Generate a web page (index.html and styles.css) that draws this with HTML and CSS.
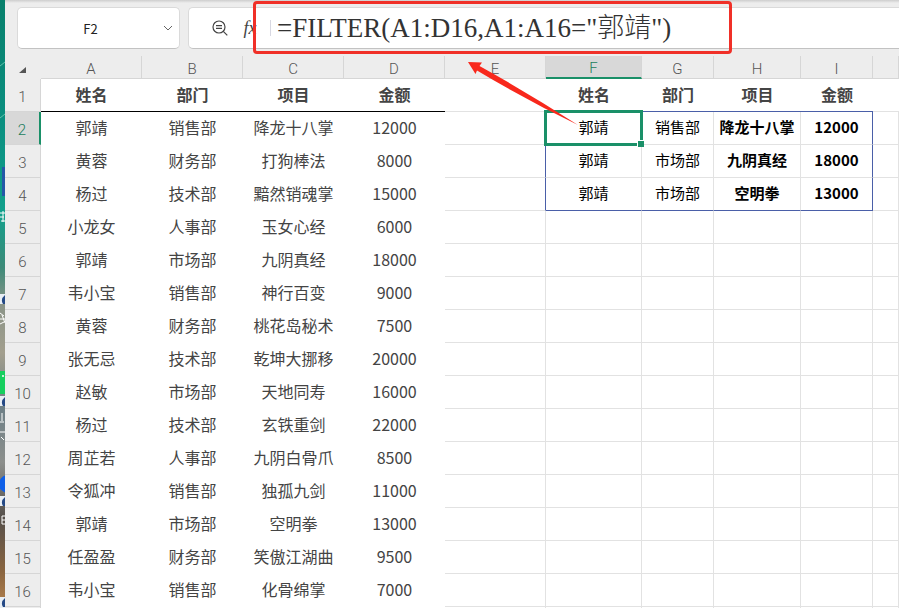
FILE: index.html
```html
<!DOCTYPE html>
<html lang="zh-CN">
<head>
    <meta charset="UTF-8">
    <meta name="viewport" content="width=device-width, initial-scale=1.0">
    <title>FILTER</title>
    <link rel="stylesheet" href="styles.css">
</head>
<body>
    <div class="desktop">
        <svg class="desktop-icons" width="5" height="608" viewBox="0 0 5 608" aria-hidden="true">
            <path d="M0 66L5 62M0 118L5 114" stroke="#5fc2ab" stroke-width="1"/>
            <rect x="2" y="167" width="3" height="29" fill="#2458a8"/>
            <path d="M0 213h5M0 217h4M1 221h4M3 211v11" stroke="#fff" stroke-width="1"/>
            <path d="M0 294h5v10H0zM0 396h5v10H0zM0 496h5v10H0zM0 597h5v11H0z" fill="#e9eff5"/>
            <path d="M5 295q-5 4-2 9h2zM5 397q-5 4-2 9h2zM5 497q-5 4-2 9h2zM5 598q-5 4-2 9h2z" fill="#254a86"/>
            <path d="M0 313l4 3M0 319h5M2 315l3 8M0 324l4-2" stroke="#fff" stroke-width="1"/>
            <path d="M0 371h5v23H0z" fill="#16cf5e"/>
            <circle cx="3" cy="376" r="1" fill="#fff"/>
            <path d="M2 413v8M0 422h4M0 432h5M1 437l3 3" stroke="#fff" stroke-width="1"/>
            <circle cx="8" cy="484" r="9" fill="#0e5fe8"/>
            <path d="M5 516H2v8h3M2 520h3" fill="none" stroke="#fff" stroke-width="1"/>
        </svg>
    </div>

    <div class="window">
        <div class="formula-bar">
            <div class="name-box">
                <input class="name-input" type="text" value="F2" aria-label="名称框">
                <button class="icon-button" type="button" aria-label="展开">
                    <svg width="10" height="6" viewBox="0 0 10 6"><path d="M1 1l4 4 4-4" fill="none" stroke="#666"/></svg>
                </button>
            </div>
            <div class="formula-box">
                <button class="icon-button" type="button" aria-label="缩小">
                    <svg width="16" height="16" viewBox="0 0 16 16" fill="none" stroke="#444" stroke-width="1.2">
                        <circle cx="7" cy="7" r="6"/>
                        <path d="M4 5.7h6M4 8.3h6M11.3 11.3l4 4"/>
                    </svg>
                </button>
                <button class="icon-button fx" type="button">fx</button>
                <span class="divider"></span>
                <input class="formula-input" type="text" value='=FILTER(A1:D16,A1:A16="郭靖")' aria-label="编辑栏">
            </div>
        </div>

        <table class="sheet">
            <colgroup>
                <col class="col-head">
                <col class="col-wide" span="5">
                <col class="col-f">
                <col class="col-g">
                <col class="col-h">
                <col class="col-g">
                <col>
            </colgroup>
            <thead>
                <tr>
                    <th class="corner"><svg width="8" height="8" viewBox="0 0 8 8"><path d="M7 1v6H0z" fill="#555"/></svg></th>
                    <th>A</th><th>B</th><th>C</th><th>D</th><th>E</th><th class="active">F</th><th>G</th><th>H</th><th>I</th><th></th>
                </tr>
            </thead>
            <tbody>
                <tr class="titles"><th>1</th><td>姓名</td><td>部门</td><td>项目</td><td>金额</td><td></td><td>姓名</td><td>部门</td><td>项目</td><td>金额</td><td></td></tr>
                <tr class="spill"><th class="active">2</th><td>郭靖</td><td>销售部</td><td>降龙十八掌</td><td>12000</td><td></td><td class="selected">郭靖</td><td>销售部</td><td>降龙十八掌</td><td>12000</td><td></td></tr>
                <tr class="spill"><th>3</th><td>黄蓉</td><td>财务部</td><td>打狗棒法</td><td>8000</td><td></td><td>郭靖</td><td>市场部</td><td>九阴真经</td><td>18000</td><td></td></tr>
                <tr class="spill spill-end"><th>4</th><td>杨过</td><td>技术部</td><td>黯然销魂掌</td><td>15000</td><td></td><td>郭靖</td><td>市场部</td><td>空明拳</td><td>13000</td><td></td></tr>
                <tr><th>5</th><td>小龙女</td><td>人事部</td><td>玉女心经</td><td>6000</td><td></td><td></td><td></td><td></td><td></td><td></td></tr>
                <tr><th>6</th><td>郭靖</td><td>市场部</td><td>九阴真经</td><td>18000</td><td></td><td></td><td></td><td></td><td></td><td></td></tr>
                <tr><th>7</th><td>韦小宝</td><td>销售部</td><td>神行百变</td><td>9000</td><td></td><td></td><td></td><td></td><td></td><td></td></tr>
                <tr><th>8</th><td>黄蓉</td><td>财务部</td><td>桃花岛秘术</td><td>7500</td><td></td><td></td><td></td><td></td><td></td><td></td></tr>
                <tr><th>9</th><td>张无忌</td><td>技术部</td><td>乾坤大挪移</td><td>20000</td><td></td><td></td><td></td><td></td><td></td><td></td></tr>
                <tr><th>10</th><td>赵敏</td><td>市场部</td><td>天地同寿</td><td>16000</td><td></td><td></td><td></td><td></td><td></td><td></td></tr>
                <tr><th>11</th><td>杨过</td><td>技术部</td><td>玄铁重剑</td><td>22000</td><td></td><td></td><td></td><td></td><td></td><td></td></tr>
                <tr><th>12</th><td>周芷若</td><td>人事部</td><td>九阴白骨爪</td><td>8500</td><td></td><td></td><td></td><td></td><td></td><td></td></tr>
                <tr><th>13</th><td>令狐冲</td><td>销售部</td><td>独孤九剑</td><td>11000</td><td></td><td></td><td></td><td></td><td></td><td></td></tr>
                <tr><th>14</th><td>郭靖</td><td>市场部</td><td>空明拳</td><td>13000</td><td></td><td></td><td></td><td></td><td></td><td></td></tr>
                <tr><th>15</th><td>任盈盈</td><td>财务部</td><td>笑傲江湖曲</td><td>9500</td><td></td><td></td><td></td><td></td><td></td><td></td></tr>
                <tr><th>16</th><td>韦小宝</td><td>销售部</td><td>化骨绵掌</td><td>7000</td><td></td><td></td><td></td><td></td><td></td><td></td></tr>
                <tr><th></th><td></td><td></td><td></td><td></td><td></td><td></td><td></td><td></td><td></td><td></td></tr>
            </tbody>
        </table>
    </div>

    <!-- Red markup drawn over the sheet -->
    <div class="mark-box"></div>
    <svg class="mark-arrow" width="112" height="66" viewBox="0 0 112 66" aria-hidden="true">
        <path d="M0 0L14 0.5 11.5 4Q62 32 110 63Q60 39 9 8.500L7.500 12z" fill="#f8281c"/>
    </svg>
</body>
</html>
```

FILE: styles.css
```css
* {
    margin: 0;
    padding: 0;
    box-sizing: border-box;
}

body {
    font-family: 'Noto Sans CJK SC', sans-serif;
    height: 100vh;
    display: flex;
    overflow: hidden;
    position: relative;
    background: #fff;
}

input,
button {
    border: none;
    background: none;
    outline: none;
    font-family: inherit;
}

/* Slice of desktop left of the window */
.desktop {
    flex: 0 0 5px;
    overflow: hidden;
    background: linear-gradient(#08806c, #0a8f80 20%, #12a08c 35%, #3d8a78 44%, #8a9488 50%, #a39f8e 58%, #6d7f86 67%, #8c8f8c 76%, #55504b 85%, #8a6540 94%, #b58350);
}

.desktop-icons {
    display: block;
}

.window {
    flex: 1;
    min-width: 0;
    overflow: hidden;
}

/* Formula bar */
.formula-bar {
    display: flex;
    gap: 8px;
    height: 56px;
    padding: 7px 0 7px 12px;
    background: linear-gradient(#cdcdcd, #ededed 3px);
}

.name-box,
.formula-box {
    display: flex;
    align-items: center;
    background: #fff;
    border: 1px solid #dadada;
    border-bottom-color: #c2c2c2;
}

.name-box {
    width: 163px;
    padding-right: 6px;
    border-radius: 5px;
}

.name-input {
    flex: 1;
    min-width: 0;
    font-size: 13px;
    text-align: center;
    color: #222;
}

.icon-button {
    display: flex;
    align-items: center;
    justify-content: center;
}

.formula-box {
    flex: 1;
    min-width: 0;
    padding-left: 23px;
    border-right: none;
    border-radius: 5px 0 0 5px;
}

.fx {
    width: 28px;
    margin-left: 8px;
    font-family: 'Liberation Serif', serif;
    font-size: 18px;
    font-style: italic;
    color: #444;
}

.divider {
    width: 1px;
    height: 16px;
    margin: 0 6px;
    background: #d8d8e2;
}

.formula-input {
    flex: 1;
    min-width: 0;
    height: 40px;
    padding-bottom: 6px;
    font-family: 'Liberation Serif', 'Noto Sans CJK SC', serif;
    font-size: 27px;
    font-weight: 300;
    color: #333;
}

/* Sheet */
.sheet {
    width: 100%;
    table-layout: fixed;
    border-collapse: separate;
    border-spacing: 0;
}

.col-head {
    width: 36px;
}

.col-wide {
    width: 101px;
}

.col-f {
    width: 96px;
}

.col-g {
    width: 72px;
}

.col-h {
    width: 87px;
}

th {
    font-family: Roboto, sans-serif;
    font-size: 15px;
    font-weight: 300;
    line-height: 18px;
    color: #555;
    background: #ededed;
    border-right: 1px solid #d6d6d6;
    border-bottom: 1px solid #d6d6d6;
}

thead th {
    height: 23px;
    padding-top: 3px;
}

thead .corner {
    border-color: #ededed;
}

.corner svg {
    display: inline-block;
}

tbody th {
    padding-top: 4px;
}

th.active {
    color: #1b7d5c;
    background: #d8d8d8;
}

thead .active {
    border-bottom: 2px solid #1a9068;
}

tbody .active {
    border-right: 2px solid #1a9068;
}

td {
    height: 33px;
    padding-bottom: 2px;
    font-size: 16px;
    line-height: 24px;
    text-align: center;
    white-space: nowrap;
    color: #444;
    border-right: 1px solid #e2e2e2;
    border-bottom: 1px solid #e2e2e2;
}

/* The source table is filled, so no gridlines show */
td:nth-child(-n+5) {
    border-right: none;
    border-bottom-color: #fff;
}

.titles td {
    padding-bottom: 3px;
    font-weight: 700;
    border-right: none;
}

.titles td:nth-child(-n+5) {
    border-bottom-color: #000;
}

/* Range filled by the formula */
.titles td:nth-child(n+7):nth-child(-n+10),
.spill-end td:nth-child(n+7):nth-child(-n+10) {
    border-bottom-color: #4a5fa8;
}

.spill td:nth-child(6),
.spill td:nth-child(10) {
    border-right-color: #4a5fa8;
}

.spill td:nth-child(n+7) {
    font-size: 15px;
    color: #000;
}

.spill td:nth-child(n+9) {
    font-weight: 700;
}

.selected {
    position: relative;
}

.selected::before {
    content: '';
    position: absolute;
    inset: -2px;
    border: 3px solid #1a9068;
}

.selected::after {
    content: '';
    position: absolute;
    right: -3px;
    bottom: -3px;
    width: 6px;
    height: 6px;
    background: #1a9068;
    border-top: 1px solid #fff;
    border-left: 1px solid #fff;
}

/* Markup */
.mark-box {
    position: absolute;
    top: 1px;
    left: 253px;
    width: 479px;
    height: 53px;
    border: 3px solid #f03028;
    border-radius: 4px;
}

.mark-arrow {
    position: absolute;
    top: 62px;
    left: 468px;
}
```
